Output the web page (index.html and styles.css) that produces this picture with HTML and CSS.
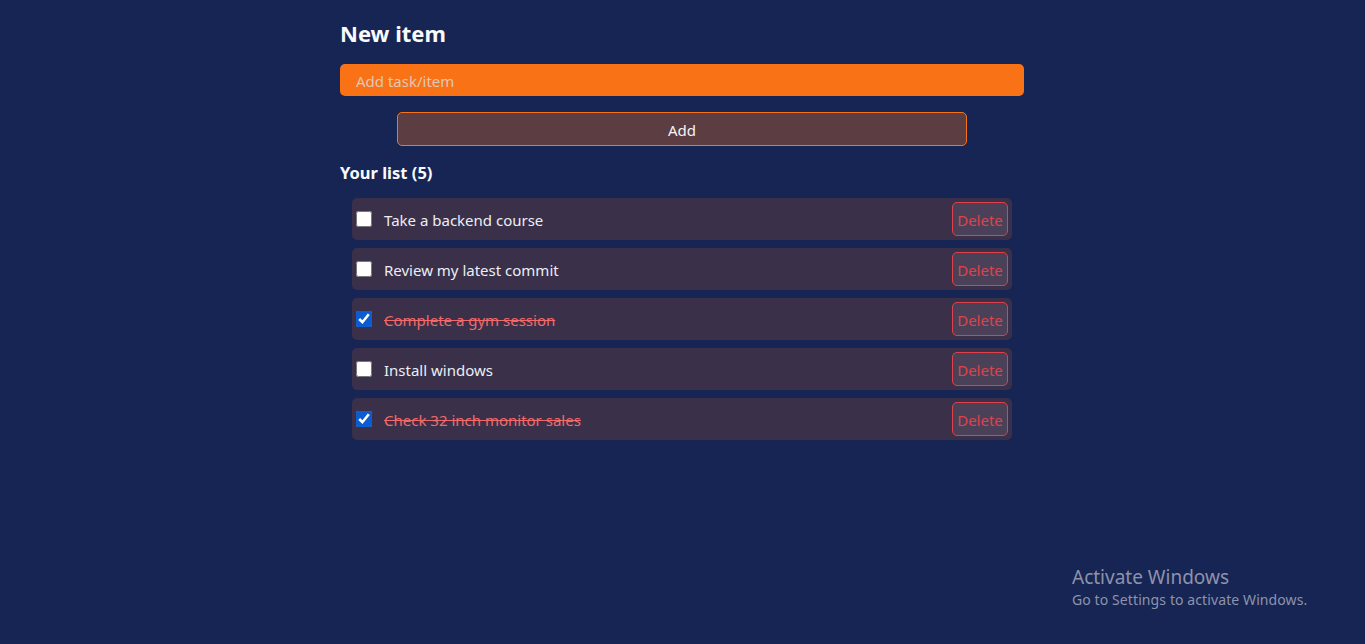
FILE: index.html
```html
<!DOCTYPE html>
<html lang="en">
<head>
<meta charset="utf-8">
<title>Todo</title>
<link rel="stylesheet" href="styles.css">
</head>
<body>
<main class="app">
  <form class="new-item">
    <h1 class="title">New item</h1>
    <input class="task-input" type="text" placeholder="Add task/item">
    <button class="add-btn" type="button">Add</button>
  </form>
  <h2 class="list-title">Your list (5)</h2>
  <ul class="list">
    <li class="item"><label class="item-label"><input type="checkbox" class="check"><span class="text">Take a backend course</span></label><button class="del-btn" type="button">Delete</button></li>
    <li class="item"><label class="item-label"><input type="checkbox" class="check"><span class="text">Review my latest commit</span></label><button class="del-btn" type="button">Delete</button></li>
    <li class="item done"><label class="item-label"><input type="checkbox" class="check" checked><span class="text">Complete a gym session</span></label><button class="del-btn" type="button">Delete</button></li>
    <li class="item"><label class="item-label"><input type="checkbox" class="check"><span class="text">Install windows</span></label><button class="del-btn" type="button">Delete</button></li>
    <li class="item done"><label class="item-label"><input type="checkbox" class="check" checked><span class="text">Check 32 inch monitor sales</span></label><button class="del-btn" type="button">Delete</button></li>
  </ul>
</main>
<div class="activate">
  <div class="act-title">Activate Windows</div>
  <div class="act-sub">Go to Settings to activate Windows.</div>
</div>
</body>
</html>
```

FILE: styles.css
```css
* { box-sizing: border-box; }
html, body { height: 100%; }
body {
  margin: 0;
  background: #172554;
  color: #f3f4f6;
  font-family: "Segoe UI", "Noto Sans", "Open Sans", sans-serif;
  overflow: hidden;
}
.app {
  width: 685px;
  margin: 0 auto;
  padding-top: 16px;
}
.new-item {
  display: flex;
  flex-direction: column;
  align-items: flex-start;
}
.title {
  margin: 0 0 14px;
  font-size: 22px;
  font-weight: 700;
  line-height: 34px;
  color: #f8fafc;
}
.task-input {
  width: 684px;
  height: 32px;
  border: none;
  border-radius: 5px;
  background: #f97316;
  padding: 1px 16px 0;
  font: inherit;
  font-size: 15px;
  color: #fff;
  outline: none;
}
.task-input::placeholder { color: #e2c6b6; }
.add-btn {
  margin: 16px 0 0 57px;
  width: 570px;
  height: 34px;
  border: 1px solid #f97316;
  border-radius: 5px;
  background: #5c3d42;
  color: #f3f4f6;
  font: inherit;
  font-size: 15px;
  padding: 2px 0 0;
}
.list-title {
  margin: 15px 0 13px;
  font-size: 16.5px;
  font-weight: 700;
  line-height: 24px;
  color: #f8fafc;
}
.list {
  list-style: none;
  margin: 0 12px;
  width: 660px;
  padding: 0;
  display: flex;
  flex-direction: column;
  gap: 8px;
}
.item {
  height: 42px;
  display: flex;
  align-items: center;
  justify-content: space-between;
  background: #3a3049;
  border-radius: 5px;
  padding: 0 4px 0 4px;
}
.item-label {
  display: flex;
  align-items: center;
  gap: 12px;
  padding-top: 2px;
}
.check {
  width: 16px;
  height: 16px;
  margin: 0 0 2px;
  accent-color: #0b5bd3;
}
.text {
  font-size: 15px;
  color: #eceef4;
}
.done .text {
  color: #f06a6a;
  text-decoration: line-through;
}
.del-btn {
  height: 34px;
  width: 56px;
  padding: 2px 0 0;
  border: 1px solid #e0414a;
  border-radius: 5px;
  background: #4a4158;
  color: #e0414a;
  font: inherit;
  font-size: 15px;
}
.activate {
  position: absolute;
  left: 1072px;
  top: 564px;
  color: #8d93ab;
}
.act-title { font-size: 19px; line-height: 26px; }
.act-sub { font-size: 14px; line-height: 20px; letter-spacing: 0.1px; }
```
